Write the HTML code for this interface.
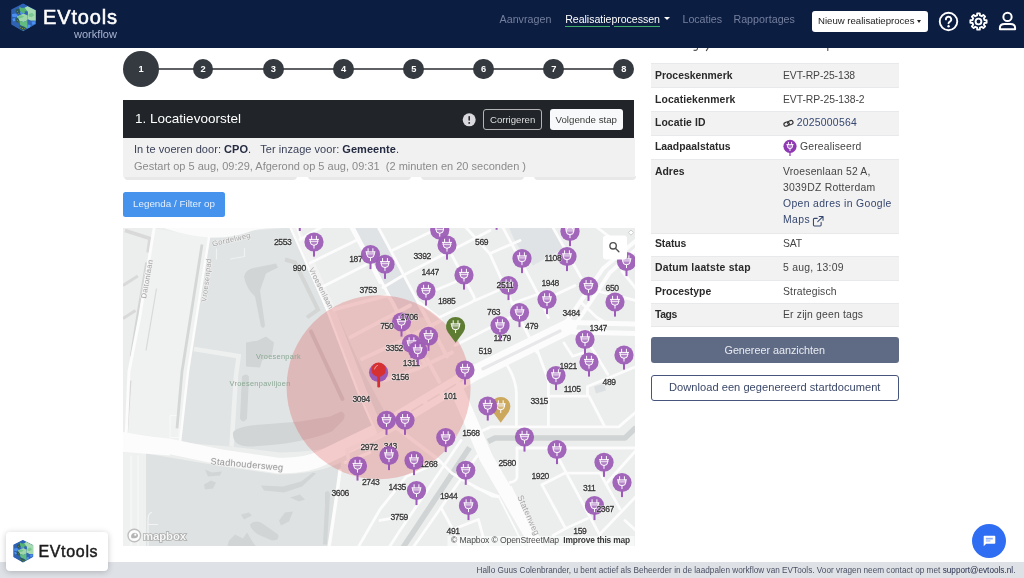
<!DOCTYPE html>
<html lang="nl">
<head>
<meta charset="utf-8">
<title>EVtools workflow</title>
<style>
*{box-sizing:border-box;margin:0;padding:0}
html,body{width:1024px;height:578px;overflow:hidden;background:#fff}
#root{position:absolute;left:0;top:0;width:1024px;height:578px;overflow:hidden;background:#fff;will-change:transform}
body{font-family:"Liberation Sans",sans-serif;color:#333;position:relative}
.abs{position:absolute;white-space:nowrap}
#hdr{left:0;top:0;width:1024px;height:48.200px;background:#0c1d42}
.nav{top:13px;font-size:10.7px;line-height:14px;color:#6d7896}
.step{border-radius:50%;background:#343a40;color:#fff;font-weight:bold;text-align:center}
.s{width:20.600px;height:20.600px;top:58.600px;font-size:9.300px;line-height:20.600px}
#panelh{left:123px;top:100px;width:511px;height:38px;background:#212529}
#panelb{left:123px;top:138px;width:511.800px;height:39.400px;background:#f1f1f2}
.btn{border-radius:3px;text-align:center}
table{border-collapse:collapse}
.row{left:651px;width:247.500px;border-top:1px solid #e8e9eb}
.row.g{background:#f2f2f2}
.k{left:655px;font-weight:bold;font-size:10.4px;color:#2a2a2a}
.v{left:783px;font-size:10.2px;color:#454545}
#map text{font-family:"Liberation Sans",sans-serif}
.num text{font-size:8.6px;text-anchor:middle;letter-spacing:-.4px}
.num .h{fill:#fff;stroke:#fff;stroke-width:1.6px;stroke-opacity:.55;fill-opacity:.55;stroke-linejoin:round}
.num .f{fill:#333;stroke:#333;stroke-width:.28px}
.st{font-size:7.6px;fill:#a4a4a4;text-anchor:middle;stroke:#f2f2f2;stroke-width:1.2px;paint-order:stroke;letter-spacing:.3px}
.pk{font-size:7.4px;fill:#8aa893;text-anchor:middle;letter-spacing:.3px}
</style>
</head>
<body>
<div id="root">

<!-- ================= MAP ================= -->
<svg id="map" class="abs" style="left:123px;top:227.500px" width="511.800" height="318.900" viewBox="123 227.500 511.800 318.900">
<rect x="123" y="227" width="512" height="320" fill="#eceded"/>
<!-- rail strip left -->
<path d="M154 228L209 237L188 371L180 442L126 438L129 371L140 315L149.500 256Z" fill="#f0f1f1"/>
<!-- Vroesenpark -->
<path d="M210 237Q232 238 253 230L290 227L335 309L363 371L392 425Q340 452 280 452L230 446L180 442L188 371Z" fill="#e0e4e5"/>
<!-- south park -->
<path d="M146 453L223 466L278 474Q315 474 341 462L337 500L330 547H146Z" fill="#dfe2e2"/>
<path d="M123 452H146V547H123Z" fill="#eff0f0"/><path d="M131 455V547M138 455V547" stroke="#f6f6f6" stroke-width="1.500" fill="none"/><path d="M148 547V520Q148 512 152 512M148 524H158" stroke="#f4f4f4" stroke-width="1.200" fill="none"/>
<!-- small parks NE -->
<path d="M353.400 227H378.400L417.500 300.500L424 317L401 317L392.500 302Z" fill="#e0e3e5"/>
<path d="M509 227H555L563 248L533 265L516 243Z" fill="#e0e3e5"/>
<path d="M594 386L604 383L606 390L596 393Z" fill="#dde0e3"/>
<!-- big building -->
<path d="M194 348.500L238.700 355.700L236 375L231.500 446" fill="none" stroke="#eef0f0" stroke-width="4.500" stroke-linejoin="miter"/>
<path d="M170 415h9v22h-9z" fill="none" stroke="#f8f8f8" stroke-width="1"/>
<!-- gray blocks top-left -->
<g fill="none" stroke="#d9d9d9" stroke-width="3.500" stroke-linecap="butt">
<path d="M125 230L150 238L148 252"/><path d="M123 285L137.800 275.600" stroke-width="3"/><path d="M123 318L135.500 310" stroke-width="3"/><path d="M130 380L126 440" stroke-width="3"/>
<path d="M146.400 262L138 312L131 356" stroke-width="2.400" stroke="#d4d5d5"/><path d="M156.500 288L146 350" stroke-width="1.200"/>
<path d="M202 244L182 371L177 428" stroke-width="2.800" stroke="#d5d7d7"/>

</g>
<!-- water -->
<g fill="#d2d5d5">
<path d="M244 276Q246 268 256 267L276 263L278 267L266 273L260 290L265 325Q264 329 261 326L255 296Q246 288 244 276Z"/>
<path d="M246 342L258 340L266 336L274 342L272 354L262 360L260 367L246 366Z"/>
<path d="M242 376Q246 372 249 376L247 418Q243 424 240 418Z"/>
<path d="M233 432Q236 426 262 424L300 421L330 416L341 411Q347 413 343 420L332 431Q300 444 250 446Q232 446 233 432Z"/>
<path d="M205 469l7 3 10-1-2 4-12 1zM204 484l7-4 5 2-3 6-8 1zM261 485l22 1 18-5 12-9 3 1-14 13-18 6-20-2zM290 497l10-3 5 5-6 2z"/>
<path d="M241 514l8-2 3 3-8 4zM250 524q6-6 14 0l14 10q2 6-6 6l-14-6q-8-6-8-10zM279 520l6-8 8-1-4 10-8 4zM325 492q4-4 5 2l-3 50h-4l2-40z"/>
<path d="M229 540l6-6 8 4 4-6 6 10 4 5h-30z"/>
</g>
<!-- L-shaped path in park -->
<path d="M285 259L295 262L318 309L307 317" fill="none" stroke="#d4d6d6" stroke-width="4"/>
<path d="M311 331L342.500 398.500" fill="none" stroke="#cdd0d0" stroke-width="4" stroke-linecap="round"/>
<!-- canals -->
<g fill="none" stroke="#d1d4d4" stroke-width="5.500" stroke-linejoin="round">
<path d="M488 441L495 437.500H625L636 427"/>
<path d="M469.500 447L414.400 530L403 547"/>
</g>
<!-- ROADS -->
<g fill="none" stroke="#fcfcfc" stroke-linecap="round" stroke-linejoin="round">
<!-- Gordelweg top -->
<path d="M165 221H300V228Q262 226 250 231Q232 238 210 237Q190 236 165 228Z" fill="#fbfbfb" stroke="none"/>
<path d="M154 228L149.500 256L140 315L129 371L126 438" stroke-width="3"/>
<path d="M209 237L188 371L180 442" stroke-width="2.400"/>
<path d="M216.500 258.500V248.400M230.500 258.500L244.500 256V248" stroke-width="1.200" stroke="#f0f1f1"/>
<!-- Stadhoudersweg -->
<path d="M123 431.400L170 439.500V455L123 451.600Z" fill="#fcfcfc" stroke="none"/>
<path d="M123 441L170 446L223 457L278 465Q305 466 323 457L379 430L475 372.200L569 326" stroke-width="15.500"/>
<path d="M566 322L603 268L636 240" stroke-width="4"/>
<path d="M573 328L610 272L636 249" stroke-width="4"/>
<path d="M570 322L636 323.500" stroke-width="5"/>
<path d="M573 331.500L636 333" stroke-width="5"/>
<!-- Statenweg -->
<path d="M458 392L466 410L486 457L530 533L540 552" stroke-width="13.500"/>
<path d="M511 486L541 548" stroke-width="1.600"/>
<!-- Vroesenlaan -->
<path d="M295 227L330.500 308L362 390L380 432" stroke-width="8.500" stroke="#f2f2f2" stroke-linecap="butt"/>
<path d="M290.400 227L326.500 308L357.500 390L376 432" stroke-width="2.200"/>
<path d="M297 227L301 239" stroke-width="1.600"/>
<path d="M340 470L336 500L329 547" stroke-width="3.400"/>
<path d="M345 462L370 452" stroke-width="3"/>
<g stroke-width="2.800">
<!-- NW grid right of Vroesenlaan -->
<path d="M300 239L320.600 227"/><path d="M310 262.500L356 240"/><path d="M323 286L366.500 264"/><path d="M351 227L380 282"/>
<path d="M353.400 227L392.500 302L424 362"/><path d="M378.400 227L417.500 300.500L447 356"/>
<path d="M392.500 249.700L430 231.700L440 227"/><path d="M383 287L403.400 274.700L490 230"/>
<path d="M334 309L388 295"/><path d="M350.600 336.600L393.700 313.700L410 305"/><path d="M362 358.500L404 339L441 320"/><path d="M427 358.500L439.400 381.400"/>
<path d="M436 289.500L456.500 281"/><path d="M452 255L473.750 295.750Q476 300 471 302L439 317"/>
<path d="M417.500 300.500L439 317"/>
<path d="M466 227L490 253.500L512.500 303.500L537 352"/>
<path d="M503 227L537.500 292.600L548.400 317"/>
<path d="M553 227L581 277"/>
<path d="M556 294L575 285"/>
<path d="M490 253L520 240"/>
<path d="M455 345L512 316"/><path d="M475 300L498 290"/><path d="M512 303L548 290"/>
<path d="M581 302L597 317L607 323"/><path d="M622 270.750L636 288"/><path d="M595 290L636 300"/>
<path d="M597 227L625 248"/>
<!-- south of main road, east -->
<path d="M537.500 350.300L548.400 380V426"/>
<path d="M506 363Q517 380 516.400 395V426"/>
<path d="M564 342.500L572.600 355.800L584 352"/>
<path d="M590.600 345.600L607.800 373.750"/>
<path d="M587.500 395V386L636 366"/>
<path d="M548 395.600H589L604.700 426"/>
<path d="M483 430L490.600 426.400H618.750L636 411.500"/>
<path d="M517 447.500H636"/><path d="M517 447.500V477Q516 481 510 482"/>
<path d="M557 455L565.600 471L600 535"/><path d="M565 472.600H600L620 508.500"/>
<path d="M542 484.300L565 472.600"/><path d="M542 484.300L565.600 528"/>
<path d="M553 535L565.600 528L587.500 518"/>
<path d="M600 533.500L636 496"/><path d="M606 483.500L629.700 457L636 450"/>
<path d="M625 520L636 530"/>
<!-- south-west of Statenweg -->
<path d="M461 440L400 530L389 547"/>
<path d="M477 455.600L425 530L413 547"/>
<path d="M438 458.750L452 472.800L467.500 482L492.500 495.500L498.750 496"/>
<path d="M358 547L380 509L406.500 476L440 461"/>
<path d="M498.750 496L516 530L524 547" stroke-width="1.800"/>
<path d="M441 507L453.400 530L460 547"/><path d="M456.500 527.500L478.400 519L486 547"/>
<path d="M475 486.700L498.400 496"/>
<path d="M380 520L394 517.500"/>
<!-- inside circle blocks -->
<path d="M404 339L418 368"/><path d="M384 380L418 368L452 352"/>
</g>
</g>
<!-- wider streets inside circle -->
<defs><clipPath id="cc"><circle cx="378.600" cy="386.800" r="92"/></clipPath></defs>
<g clip-path="url(#cc)" fill="none" stroke="#f8f8f8" stroke-width="3.800" stroke-linecap="round" stroke-linejoin="round">
<path d="M334 309L388 295"/><path d="M350.600 336.600L393.700 313.700L410 305"/><path d="M362 358.500L404 339L441 320"/>
<path d="M388 295L392.500 302L424 362"/><path d="M413 292L417.500 300.500L447 356"/>
<path d="M404 339L418 368"/><path d="M384 380L418 368L452 352"/><path d="M427 358.500L439.400 381.400"/>
<path d="M396 427L438 458.750"/><path d="M406.500 476L440 461"/>
<path d="M347 450L352 478"/><path d="M347 450L396 427"/>
</g>
<!-- median of main road -->
<path d="M483 368.300L560 330.500" fill="none" stroke="#e8e8ea" stroke-width="3.200" stroke-linecap="round"/>
<path d="M395 420.500L468 376.500" fill="none" stroke="#eceded" stroke-width="1.500" stroke-dasharray="14 5"/>
<!-- pink radius circle -->
<circle cx="378.600" cy="386.800" r="92" fill="#d94848" fill-opacity=".27"/>
<!-- street labels -->
<text class="st" transform="translate(232 241.500) rotate(-13)">Gordelweg</text>
<text class="st" transform="translate(209 280) rotate(-83)">Vroesenpad</text>
<text class="st" transform="translate(149.500 279) rotate(-80)">Daltonlaan</text>
<text class="st" transform="translate(319 289) rotate(63)">Vroesenlaan</text>
<text class="st" transform="translate(246.750 467) rotate(5)" style="font-size:9.200px;fill:#9a9a9a">Stadhoudersweg</text>
<text class="st" transform="translate(526 516) rotate(66)" style="font-size:8.600px">Statenweg</text>
<text class="pk" x="278.500" y="358.800">Vroesenpark</text>
<text class="pk" x="260" y="385.700">Vroesenpaviljoen</text>


<g class="num">
<text class="h" x="355.7" y="261.6">187</text><text class="f" x="355.7" y="261.6">187</text>
<text class="h" x="502.2" y="340.6">1279</text><text class="f" x="502.2" y="340.6">1279</text>
<text class="h" x="411.2" y="365.35">1311</text><text class="f" x="411.2" y="365.35">1311</text>
<text class="h" x="390.2" y="448.6">343</text><text class="f" x="390.2" y="448.6">343</text>
<text class="h" x="428.7" y="466.1">1268</text><text class="f" x="428.7" y="466.1">1268</text>
</g>
<g opacity="1"><path d="M447.87 331.69A9.6 9.6 0 1 1 463.33 331.69L455.6 342.2Z" fill="#5e7d32"/><g stroke="#fff" stroke-width="1" fill="none" stroke-linecap="round"><path d="M453.20000000000005 320.2V323.4M458.0 320.2V323.4M451.0 323.4H460.20000000000005M455.6 329.4V332.2"/><path d="M451.8 323.4V325.5a3.8 3.8 0 0 0 7.6 0V323.4" fill="rgba(255,255,255,0.2)"/><path d="M451.70000000000005 325.4H459.5" stroke-width="0.8"/></g></g><g opacity="0.9"><path d="M493.02 411.69A9.6 9.6 0 1 1 508.48 411.69L500.75 422.2Z" fill="#c9a14e"/><g stroke="#fff" stroke-width="1" fill="none" stroke-linecap="round"><path d="M498.35 400.2V403.4M503.15 400.2V403.4M496.15 403.4H505.35M500.75 409.4V412.2"/><path d="M496.95 403.4V405.5a3.8 3.8 0 0 0 7.6 0V403.4" fill="rgba(255,255,255,0.2)"/><path d="M496.85 405.4H504.65" stroke-width="0.8"/></g></g>
<g opacity=".96">
<rect x="298.800" y="227.500" width="2" height="3" fill="#9a55b8"/><rect x="495.600" y="227.500" width="2" height="1.800" fill="#9a55b8"/>
<g><rect x="438.75" y="237.5" width="2" height="6.6" fill="#9a55b8"/><circle cx="439.75" cy="229.5" r="9.6" fill="#9b59b6" fill-opacity="0.96"/><g stroke="#fff" stroke-width="1" fill="none" stroke-linecap="round"><path d="M437.35 223.7V226.9M442.15 223.7V226.9M435.15 226.9H444.35M439.75 232.9V235.7"/><path d="M435.95 226.9V229.0a3.8 3.8 0 0 0 7.6 0V226.9" fill="rgba(255,255,255,0.2)"/><path d="M435.85 228.9H443.65" stroke-width="0.8"/></g></g>
<g><rect x="569" y="239" width="2" height="6.6" fill="#9a55b8"/><circle cx="570" cy="231" r="9.6" fill="#9b59b6" fill-opacity="0.96"/><g stroke="#fff" stroke-width="1" fill="none" stroke-linecap="round"><path d="M567.6 225.2V228.4M572.4 225.2V228.4M565.4 228.4H574.6M570 234.4V237.2"/><path d="M566.2 228.4V230.5a3.8 3.8 0 0 0 7.6 0V228.4" fill="rgba(255,255,255,0.2)"/><path d="M566.1 230.4H573.9" stroke-width="0.8"/></g></g>
<g><rect x="313" y="249.5" width="2" height="6.6" fill="#9a55b8"/><circle cx="314" cy="241.5" r="9.6" fill="#9b59b6" fill-opacity="0.96"/><g stroke="#fff" stroke-width="1" fill="none" stroke-linecap="round"><path d="M311.6 235.7V238.9M316.4 235.7V238.9M309.4 238.9H318.6M314 244.9V247.7"/><path d="M310.2 238.9V241.0a3.8 3.8 0 0 0 7.6 0V238.9" fill="rgba(255,255,255,0.2)"/><path d="M310.1 240.9H317.9" stroke-width="0.8"/></g></g>
<g><rect x="446" y="252.5" width="2" height="6.6" fill="#9a55b8"/><circle cx="447" cy="244.5" r="9.6" fill="#9b59b6" fill-opacity="0.96"/><g stroke="#fff" stroke-width="1" fill="none" stroke-linecap="round"><path d="M444.6 238.7V241.9M449.4 238.7V241.9M442.4 241.9H451.6M447 247.9V250.7"/><path d="M443.2 241.9V244.0a3.8 3.8 0 0 0 7.6 0V241.9" fill="rgba(255,255,255,0.2)"/><path d="M443.1 243.9H450.9" stroke-width="0.8"/></g></g>
<g><rect x="369.5" y="262" width="2" height="6.6" fill="#9a55b8"/><circle cx="370.5" cy="254" r="9.6" fill="#9b59b6" fill-opacity="0.96"/><g stroke="#fff" stroke-width="1" fill="none" stroke-linecap="round"><path d="M368.1 248.2V251.4M372.9 248.2V251.4M365.9 251.4H375.1M370.5 257.4V260.2"/><path d="M366.7 251.4V253.5a3.8 3.8 0 0 0 7.6 0V251.4" fill="rgba(255,255,255,0.2)"/><path d="M366.6 253.4H374.4" stroke-width="0.8"/></g></g>
<g><rect x="566" y="264" width="2" height="6.6" fill="#9a55b8"/><circle cx="567" cy="256" r="9.6" fill="#9b59b6" fill-opacity="0.96"/><g stroke="#fff" stroke-width="1" fill="none" stroke-linecap="round"><path d="M564.6 250.2V253.4M569.4 250.2V253.4M562.4 253.4H571.6M567 259.4V262.2"/><path d="M563.2 253.4V255.5a3.8 3.8 0 0 0 7.6 0V253.4" fill="rgba(255,255,255,0.2)"/><path d="M563.1 255.4H570.9" stroke-width="0.8"/></g></g>
<g><rect x="521" y="266" width="2" height="6.6" fill="#9a55b8"/><circle cx="522" cy="258" r="9.6" fill="#9b59b6" fill-opacity="0.96"/><g stroke="#fff" stroke-width="1" fill="none" stroke-linecap="round"><path d="M519.6 252.2V255.4M524.4 252.2V255.4M517.4 255.4H526.6M522 261.4V264.2"/><path d="M518.2 255.4V257.5a3.8 3.8 0 0 0 7.6 0V255.4" fill="rgba(255,255,255,0.2)"/><path d="M518.1 257.4H525.9" stroke-width="0.8"/></g></g>
<g><rect x="625.5" y="269" width="2" height="6.6" fill="#9a55b8"/><circle cx="626.5" cy="261" r="9.6" fill="#9b59b6" fill-opacity="0.96"/><g stroke="#fff" stroke-width="1" fill="none" stroke-linecap="round"><path d="M624.1 255.2V258.4M628.9 255.2V258.4M621.9 258.4H631.1M626.5 264.4V267.2"/><path d="M622.7 258.4V260.5a3.8 3.8 0 0 0 7.6 0V258.4" fill="rgba(255,255,255,0.2)"/><path d="M622.6 260.4H630.4" stroke-width="0.8"/></g></g>
<g><rect x="384" y="271.75" width="2" height="6.6" fill="#9a55b8"/><circle cx="385" cy="263.75" r="9.6" fill="#9b59b6" fill-opacity="0.96"/><g stroke="#fff" stroke-width="1" fill="none" stroke-linecap="round"><path d="M382.6 257.95V261.15M387.4 257.95V261.15M380.4 261.15H389.6M385 267.15V269.95"/><path d="M381.2 261.15V263.25a3.8 3.8 0 0 0 7.6 0V261.15" fill="rgba(255,255,255,0.2)"/><path d="M381.1 263.15H388.9" stroke-width="0.8"/></g></g>
<g><rect x="463" y="282.5" width="2" height="6.6" fill="#9a55b8"/><circle cx="464" cy="274.5" r="9.6" fill="#9b59b6" fill-opacity="0.96"/><g stroke="#fff" stroke-width="1" fill="none" stroke-linecap="round"><path d="M461.6 268.7V271.9M466.4 268.7V271.9M459.4 271.9H468.6M464 277.9V280.7"/><path d="M460.2 271.9V274.0a3.8 3.8 0 0 0 7.6 0V271.9" fill="rgba(255,255,255,0.2)"/><path d="M460.1 273.9H467.9" stroke-width="0.8"/></g></g>
<g><rect x="507.5" y="293" width="2" height="6.6" fill="#9a55b8"/><circle cx="508.5" cy="285" r="9.6" fill="#9b59b6" fill-opacity="0.96"/><g stroke="#fff" stroke-width="1" fill="none" stroke-linecap="round"><path d="M506.1 279.2V282.4M510.9 279.2V282.4M503.9 282.4H513.1M508.5 288.4V291.2"/><path d="M504.7 282.4V284.5a3.8 3.8 0 0 0 7.6 0V282.4" fill="rgba(255,255,255,0.2)"/><path d="M504.6 284.4H512.4" stroke-width="0.8"/></g></g>
<g><rect x="587.5" y="293.75" width="2" height="6.6" fill="#9a55b8"/><circle cx="588.5" cy="285.75" r="9.6" fill="#9b59b6" fill-opacity="0.96"/><g stroke="#fff" stroke-width="1" fill="none" stroke-linecap="round"><path d="M586.1 279.95V283.15M590.9 279.95V283.15M583.9 283.15H593.1M588.5 289.15V291.95"/><path d="M584.7 283.15V285.25a3.8 3.8 0 0 0 7.6 0V283.15" fill="rgba(255,255,255,0.2)"/><path d="M584.6 285.15H592.4" stroke-width="0.8"/></g></g>
<g><rect x="425" y="298.5" width="2" height="6.6" fill="#9a55b8"/><circle cx="426" cy="290.5" r="9.6" fill="#9b59b6" fill-opacity="0.96"/><g stroke="#fff" stroke-width="1" fill="none" stroke-linecap="round"><path d="M423.6 284.7V287.9M428.4 284.7V287.9M421.4 287.9H430.6M426 293.9V296.7"/><path d="M422.2 287.9V290.0a3.8 3.8 0 0 0 7.6 0V287.9" fill="rgba(255,255,255,0.2)"/><path d="M422.1 289.9H429.9" stroke-width="0.8"/></g></g>
<g><rect x="546" y="307" width="2" height="6.6" fill="#9a55b8"/><circle cx="547" cy="299" r="9.6" fill="#9b59b6" fill-opacity="0.96"/><g stroke="#fff" stroke-width="1" fill="none" stroke-linecap="round"><path d="M544.6 293.2V296.4M549.4 293.2V296.4M542.4 296.4H551.6M547 302.4V305.2"/><path d="M543.2 296.4V298.5a3.8 3.8 0 0 0 7.6 0V296.4" fill="rgba(255,255,255,0.2)"/><path d="M543.1 298.4H550.9" stroke-width="0.8"/></g></g>
<g><rect x="614" y="309.5" width="2" height="6.6" fill="#9a55b8"/><circle cx="615" cy="301.5" r="9.6" fill="#9b59b6" fill-opacity="0.96"/><g stroke="#fff" stroke-width="1" fill="none" stroke-linecap="round"><path d="M612.6 295.7V298.9M617.4 295.7V298.9M610.4 298.9H619.6M615 304.9V307.7"/><path d="M611.2 298.9V301.0a3.8 3.8 0 0 0 7.6 0V298.9" fill="rgba(255,255,255,0.2)"/><path d="M611.1 300.9H618.9" stroke-width="0.8"/></g></g>
<g><rect x="518.5" y="320" width="2" height="6.6" fill="#9a55b8"/><circle cx="519.5" cy="312" r="9.6" fill="#9b59b6" fill-opacity="0.96"/><g stroke="#fff" stroke-width="1" fill="none" stroke-linecap="round"><path d="M517.1 306.2V309.4M521.9 306.2V309.4M514.9 309.4H524.1M519.5 315.4V318.2"/><path d="M515.7 309.4V311.5a3.8 3.8 0 0 0 7.6 0V309.4" fill="rgba(255,255,255,0.2)"/><path d="M515.6 311.4H523.4" stroke-width="0.8"/></g></g>
<g><rect x="400.5" y="329.5" width="2" height="6.6" fill="#9a55b8"/><circle cx="401.5" cy="321.5" r="9.6" fill="#9b59b6" fill-opacity="0.96"/><g stroke="#fff" stroke-width="1" fill="none" stroke-linecap="round"><path d="M399.1 315.7V318.9M403.9 315.7V318.9M396.9 318.9H406.1M401.5 324.9V327.7"/><path d="M397.7 318.9V321.0a3.8 3.8 0 0 0 7.6 0V318.9" fill="rgba(255,255,255,0.2)"/><path d="M397.6 320.9H405.4" stroke-width="0.8"/></g></g>
<g><rect x="499" y="333" width="2" height="6.6" fill="#9a55b8"/><circle cx="500" cy="325" r="9.6" fill="#9b59b6" fill-opacity="0.96"/><g stroke="#fff" stroke-width="1" fill="none" stroke-linecap="round"><path d="M497.6 319.2V322.4M502.4 319.2V322.4M495.4 322.4H504.6M500 328.4V331.2"/><path d="M496.2 322.4V324.5a3.8 3.8 0 0 0 7.6 0V322.4" fill="rgba(255,255,255,0.2)"/><path d="M496.1 324.4H503.9" stroke-width="0.8"/></g></g>
<g><rect x="427.5" y="343.75" width="2" height="6.6" fill="#9a55b8"/><circle cx="428.5" cy="335.75" r="9.6" fill="#9b59b6" fill-opacity="0.96"/><g stroke="#fff" stroke-width="1" fill="none" stroke-linecap="round"><path d="M426.1 329.95V333.15M430.9 329.95V333.15M423.9 333.15H433.1M428.5 339.15V341.95"/><path d="M424.7 333.15V335.25a3.8 3.8 0 0 0 7.6 0V333.15" fill="rgba(255,255,255,0.2)"/><path d="M424.6 335.15H432.4" stroke-width="0.8"/></g></g>
<g><rect x="584" y="347" width="2" height="6.6" fill="#9a55b8"/><circle cx="585" cy="339" r="9.6" fill="#9b59b6" fill-opacity="0.96"/><g stroke="#fff" stroke-width="1" fill="none" stroke-linecap="round"><path d="M582.6 333.2V336.4M587.4 333.2V336.4M580.4 336.4H589.6M585 342.4V345.2"/><path d="M581.2 336.4V338.5a3.8 3.8 0 0 0 7.6 0V336.4" fill="rgba(255,255,255,0.2)"/><path d="M581.1 338.4H588.9" stroke-width="0.8"/></g></g>
<g><rect x="410.5" y="351" width="2" height="6.6" fill="#9a55b8"/><circle cx="411.5" cy="343" r="9.6" fill="#9b59b6" fill-opacity="0.96"/><g stroke="#fff" stroke-width="1" fill="none" stroke-linecap="round"><path d="M409.1 337.2V340.4M413.9 337.2V340.4M406.9 340.4H416.1M411.5 346.4V349.2"/><path d="M407.7 340.4V342.5a3.8 3.8 0 0 0 7.6 0V340.4" fill="rgba(255,255,255,0.2)"/><path d="M407.6 342.4H415.4" stroke-width="0.8"/></g></g>
<g><rect x="416.75" y="358" width="2" height="6.6" fill="#9a55b8"/><circle cx="417.75" cy="350" r="9.6" fill="#9b59b6" fill-opacity="0.96"/><g stroke="#fff" stroke-width="1" fill="none" stroke-linecap="round"><path d="M415.35 344.2V347.4M420.15 344.2V347.4M413.15 347.4H422.35M417.75 353.4V356.2"/><path d="M413.95 347.4V349.5a3.8 3.8 0 0 0 7.6 0V347.4" fill="rgba(255,255,255,0.2)"/><path d="M413.85 349.4H421.65" stroke-width="0.8"/></g></g>
<g><rect x="623" y="362.5" width="2" height="6.6" fill="#9a55b8"/><circle cx="624" cy="354.5" r="9.6" fill="#9b59b6" fill-opacity="0.96"/><g stroke="#fff" stroke-width="1" fill="none" stroke-linecap="round"><path d="M621.6 348.7V351.9M626.4 348.7V351.9M619.4 351.9H628.6M624 357.9V360.7"/><path d="M620.2 351.9V354.0a3.8 3.8 0 0 0 7.6 0V351.9" fill="rgba(255,255,255,0.2)"/><path d="M620.1 353.9H627.9" stroke-width="0.8"/></g></g>
<g><rect x="588" y="369.5" width="2" height="6.6" fill="#9a55b8"/><circle cx="589" cy="361.5" r="9.6" fill="#9b59b6" fill-opacity="0.96"/><g stroke="#fff" stroke-width="1" fill="none" stroke-linecap="round"><path d="M586.6 355.7V358.9M591.4 355.7V358.9M584.4 358.9H593.6M589 364.9V367.7"/><path d="M585.2 358.9V361.0a3.8 3.8 0 0 0 7.6 0V358.9" fill="rgba(255,255,255,0.2)"/><path d="M585.1 360.9H592.9" stroke-width="0.8"/></g></g>
<g><rect x="464" y="377.5" width="2" height="6.6" fill="#9a55b8"/><circle cx="465" cy="369.5" r="9.6" fill="#9b59b6" fill-opacity="0.96"/><g stroke="#fff" stroke-width="1" fill="none" stroke-linecap="round"><path d="M462.6 363.7V366.9M467.4 363.7V366.9M460.4 366.9H469.6M465 372.9V375.7"/><path d="M461.2 366.9V369.0a3.8 3.8 0 0 0 7.6 0V366.9" fill="rgba(255,255,255,0.2)"/><path d="M461.1 368.9H468.9" stroke-width="0.8"/></g></g>
<g><rect x="555" y="383" width="2" height="6.6" fill="#9a55b8"/><circle cx="556" cy="375" r="9.6" fill="#9b59b6" fill-opacity="0.96"/><g stroke="#fff" stroke-width="1" fill="none" stroke-linecap="round"><path d="M553.6 369.2V372.4M558.4 369.2V372.4M551.4 372.4H560.6M556 378.4V381.2"/><path d="M552.2 372.4V374.5a3.8 3.8 0 0 0 7.6 0V372.4" fill="rgba(255,255,255,0.2)"/><path d="M552.1 374.4H559.9" stroke-width="0.8"/></g></g>
<g><rect x="486.75" y="413.5" width="2" height="6.6" fill="#9a55b8"/><circle cx="487.75" cy="405.5" r="9.6" fill="#9b59b6" fill-opacity="0.96"/><g stroke="#fff" stroke-width="1" fill="none" stroke-linecap="round"><path d="M485.35 399.7V402.9M490.15 399.7V402.9M483.15 402.9H492.35M487.75 408.9V411.7"/><path d="M483.95 402.9V405.0a3.8 3.8 0 0 0 7.6 0V402.9" fill="rgba(255,255,255,0.2)"/><path d="M483.85 404.9H491.65" stroke-width="0.8"/></g></g>
<g><rect x="385.5" y="427.75" width="2" height="6.6" fill="#9a55b8"/><circle cx="386.5" cy="419.75" r="9.6" fill="#9b59b6" fill-opacity="0.96"/><g stroke="#fff" stroke-width="1" fill="none" stroke-linecap="round"><path d="M384.1 413.95V417.15M388.9 413.95V417.15M381.9 417.15H391.1M386.5 423.15V425.95"/><path d="M382.7 417.15V419.25a3.8 3.8 0 0 0 7.6 0V417.15" fill="rgba(255,255,255,0.2)"/><path d="M382.6 419.15H390.4" stroke-width="0.8"/></g></g>
<g><rect x="404" y="427.75" width="2" height="6.6" fill="#9a55b8"/><circle cx="405" cy="419.75" r="9.6" fill="#9b59b6" fill-opacity="0.96"/><g stroke="#fff" stroke-width="1" fill="none" stroke-linecap="round"><path d="M402.6 413.95V417.15M407.4 413.95V417.15M400.4 417.15H409.6M405 423.15V425.95"/><path d="M401.2 417.15V419.25a3.8 3.8 0 0 0 7.6 0V417.15" fill="rgba(255,255,255,0.2)"/><path d="M401.1 419.15H408.9" stroke-width="0.8"/></g></g>
<g><rect x="523.5" y="444.5" width="2" height="6.6" fill="#9a55b8"/><circle cx="524.5" cy="436.5" r="9.6" fill="#9b59b6" fill-opacity="0.96"/><g stroke="#fff" stroke-width="1" fill="none" stroke-linecap="round"><path d="M522.1 430.7V433.9M526.9 430.7V433.9M519.9 433.9H529.1M524.5 439.9V442.7"/><path d="M520.7 433.9V436.0a3.8 3.8 0 0 0 7.6 0V433.9" fill="rgba(255,255,255,0.2)"/><path d="M520.6 435.9H528.4" stroke-width="0.8"/></g></g>
<g><rect x="444.75" y="445" width="2" height="6.6" fill="#9a55b8"/><circle cx="445.75" cy="437" r="9.6" fill="#9b59b6" fill-opacity="0.96"/><g stroke="#fff" stroke-width="1" fill="none" stroke-linecap="round"><path d="M443.35 431.2V434.4M448.15 431.2V434.4M441.15 434.4H450.35M445.75 440.4V443.2"/><path d="M441.95 434.4V436.5a3.8 3.8 0 0 0 7.6 0V434.4" fill="rgba(255,255,255,0.2)"/><path d="M441.85 436.4H449.65" stroke-width="0.8"/></g></g>
<g><rect x="556" y="457" width="2" height="6.6" fill="#9a55b8"/><circle cx="557" cy="449" r="9.6" fill="#9b59b6" fill-opacity="0.96"/><g stroke="#fff" stroke-width="1" fill="none" stroke-linecap="round"><path d="M554.6 443.2V446.4M559.4 443.2V446.4M552.4 446.4H561.6M557 452.4V455.2"/><path d="M553.2 446.4V448.5a3.8 3.8 0 0 0 7.6 0V446.4" fill="rgba(255,255,255,0.2)"/><path d="M553.1 448.4H560.9" stroke-width="0.8"/></g></g>
<g><rect x="388" y="463" width="2" height="6.6" fill="#9a55b8"/><circle cx="389" cy="455" r="9.6" fill="#9b59b6" fill-opacity="0.96"/><g stroke="#fff" stroke-width="1" fill="none" stroke-linecap="round"><path d="M386.6 449.2V452.4M391.4 449.2V452.4M384.4 452.4H393.6M389 458.4V461.2"/><path d="M385.2 452.4V454.5a3.8 3.8 0 0 0 7.6 0V452.4" fill="rgba(255,255,255,0.2)"/><path d="M385.1 454.4H392.9" stroke-width="0.8"/></g></g>
<g><rect x="413" y="468" width="2" height="6.6" fill="#9a55b8"/><circle cx="414" cy="460" r="9.6" fill="#9b59b6" fill-opacity="0.96"/><g stroke="#fff" stroke-width="1" fill="none" stroke-linecap="round"><path d="M411.6 454.2V457.4M416.4 454.2V457.4M409.4 457.4H418.6M414 463.4V466.2"/><path d="M410.2 457.4V459.5a3.8 3.8 0 0 0 7.6 0V457.4" fill="rgba(255,255,255,0.2)"/><path d="M410.1 459.4H417.9" stroke-width="0.8"/></g></g>
<g><rect x="603" y="469.75" width="2" height="6.6" fill="#9a55b8"/><circle cx="604" cy="461.75" r="9.6" fill="#9b59b6" fill-opacity="0.96"/><g stroke="#fff" stroke-width="1" fill="none" stroke-linecap="round"><path d="M601.6 455.95V459.15M606.4 455.95V459.15M599.4 459.15H608.6M604 465.15V467.95"/><path d="M600.2 459.15V461.25a3.8 3.8 0 0 0 7.6 0V459.15" fill="rgba(255,255,255,0.2)"/><path d="M600.1 461.15H607.9" stroke-width="0.8"/></g></g>
<g><rect x="356.5" y="473.5" width="2" height="6.6" fill="#9a55b8"/><circle cx="357.5" cy="465.5" r="9.6" fill="#9b59b6" fill-opacity="0.96"/><g stroke="#fff" stroke-width="1" fill="none" stroke-linecap="round"><path d="M355.1 459.7V462.9M359.9 459.7V462.9M352.9 462.9H362.1M357.5 468.9V471.7"/><path d="M353.7 462.9V465.0a3.8 3.8 0 0 0 7.6 0V462.9" fill="rgba(255,255,255,0.2)"/><path d="M353.6 464.9H361.4" stroke-width="0.8"/></g></g>
<g><rect x="464.75" y="477.75" width="2" height="6.6" fill="#9a55b8"/><circle cx="465.75" cy="469.75" r="9.6" fill="#9b59b6" fill-opacity="0.96"/><g stroke="#fff" stroke-width="1" fill="none" stroke-linecap="round"><path d="M463.35 463.95V467.15M468.15 463.95V467.15M461.15 467.15H470.35M465.75 473.15V475.95"/><path d="M461.95 467.15V469.25a3.8 3.8 0 0 0 7.6 0V467.15" fill="rgba(255,255,255,0.2)"/><path d="M461.85 469.15H469.65" stroke-width="0.8"/></g></g>
<g><rect x="621" y="490" width="2" height="6.6" fill="#9a55b8"/><circle cx="622" cy="482" r="9.6" fill="#9b59b6" fill-opacity="0.96"/><g stroke="#fff" stroke-width="1" fill="none" stroke-linecap="round"><path d="M619.6 476.2V479.4M624.4 476.2V479.4M617.4 479.4H626.6M622 485.4V488.2"/><path d="M618.2 479.4V481.5a3.8 3.8 0 0 0 7.6 0V479.4" fill="rgba(255,255,255,0.2)"/><path d="M618.1 481.4H625.9" stroke-width="0.8"/></g></g>
<g><rect x="415.5" y="498" width="2" height="6.6" fill="#9a55b8"/><circle cx="416.5" cy="490" r="9.6" fill="#9b59b6" fill-opacity="0.96"/><g stroke="#fff" stroke-width="1" fill="none" stroke-linecap="round"><path d="M414.1 484.2V487.4M418.9 484.2V487.4M411.9 487.4H421.1M416.5 493.4V496.2"/><path d="M412.7 487.4V489.5a3.8 3.8 0 0 0 7.6 0V487.4" fill="rgba(255,255,255,0.2)"/><path d="M412.6 489.4H420.4" stroke-width="0.8"/></g></g>
<g><rect x="467.5" y="513" width="2" height="6.6" fill="#9a55b8"/><circle cx="468.5" cy="505" r="9.6" fill="#9b59b6" fill-opacity="0.96"/><g stroke="#fff" stroke-width="1" fill="none" stroke-linecap="round"><path d="M466.1 499.2V502.4M470.9 499.2V502.4M463.9 502.4H473.1M468.5 508.4V511.2"/><path d="M464.7 502.4V504.5a3.8 3.8 0 0 0 7.6 0V502.4" fill="rgba(255,255,255,0.2)"/><path d="M464.6 504.4H472.4" stroke-width="0.8"/></g></g>
<g><rect x="593.5" y="513" width="2" height="6.6" fill="#9a55b8"/><circle cx="594.5" cy="505" r="9.6" fill="#9b59b6" fill-opacity="0.96"/><g stroke="#fff" stroke-width="1" fill="none" stroke-linecap="round"><path d="M592.1 499.2V502.4M596.9 499.2V502.4M589.9 502.4H599.1M594.5 508.4V511.2"/><path d="M590.7 502.4V504.5a3.8 3.8 0 0 0 7.6 0V502.4" fill="rgba(255,255,255,0.2)"/><path d="M590.6 504.4H598.4" stroke-width="0.8"/></g></g>
</g>
<!-- red pin -->
<g>
<circle cx="378.6" cy="372" r="9.6" fill="#9b59b6"/>
<rect x="377.3" y="375" width="2.8" height="12" rx="1.2" fill="#d32f2f"/>
<circle cx="378.6" cy="369.2" r="7.2" fill="#d63030"/>
<path d="M374.5 368.5a4.5 4.5 0 0 1 3-3.6" stroke="#f3b0b0" stroke-width="0.9" fill="none" stroke-linecap="round"/>
</g>

<g class="num">
<text class="h" x="282.7" y="244.6">2553</text><text class="f" x="282.7" y="244.6">2553</text>
<text class="h" x="299.2" y="270.6">990</text><text class="f" x="299.2" y="270.6">990</text>
<text class="h" x="368.2" y="292.6">3753</text><text class="f" x="368.2" y="292.6">3753</text>
<text class="h" x="481.7" y="244.1">569</text><text class="f" x="481.7" y="244.1">569</text>
<text class="h" x="422.2" y="258.6">3392</text><text class="f" x="422.2" y="258.6">3392</text>
<text class="h" x="430.2" y="274.1">1447</text><text class="f" x="430.2" y="274.1">1447</text>
<text class="h" x="446.7" y="303.6">1885</text><text class="f" x="446.7" y="303.6">1885</text>
<text class="h" x="552.95" y="260.6">1108</text><text class="f" x="552.95" y="260.6">1108</text>
<text class="h" x="504.95" y="287.6">2511</text><text class="f" x="504.95" y="287.6">2511</text>
<text class="h" x="550.2" y="285.1">1948</text><text class="f" x="550.2" y="285.1">1948</text>
<text class="h" x="612.2" y="290.1">650</text><text class="f" x="612.2" y="290.1">650</text>
<text class="h" x="571.2" y="315.35">3484</text><text class="f" x="571.2" y="315.35">3484</text>
<text class="h" x="493.7" y="314.6">763</text><text class="f" x="493.7" y="314.6">763</text>
<text class="h" x="531.7" y="328.1">479</text><text class="f" x="531.7" y="328.1">479</text>
<text class="h" x="598.2" y="330.6">1347</text><text class="f" x="598.2" y="330.6">1347</text>
<text class="h" x="409.2" y="319.6">1706</text><text class="f" x="409.2" y="319.6">1706</text>
<text class="h" x="386.7" y="328.6">750</text><text class="f" x="386.7" y="328.6">750</text>
<text class="h" x="394.2" y="350.35">3352</text><text class="f" x="394.2" y="350.35">3352</text>
<text class="h" x="485.2" y="353.6">519</text><text class="f" x="485.2" y="353.6">519</text>
<text class="h" x="568.2" y="368.35">1921</text><text class="f" x="568.2" y="368.35">1921</text>
<text class="h" x="400.2" y="379.6">3156</text><text class="f" x="400.2" y="379.6">3156</text>
<text class="h" x="450.2" y="398.6">101</text><text class="f" x="450.2" y="398.6">101</text>
<text class="h" x="572.2" y="391.1">1105</text><text class="f" x="572.2" y="391.1">1105</text>
<text class="h" x="609.2" y="384.1">489</text><text class="f" x="609.2" y="384.1">489</text>
<text class="h" x="539.2" y="403.6">3315</text><text class="f" x="539.2" y="403.6">3315</text>
<text class="h" x="470.95" y="435.1">1568</text><text class="f" x="470.95" y="435.1">1568</text>
<text class="h" x="507.2" y="465.6">2580</text><text class="f" x="507.2" y="465.6">2580</text>
<text class="h" x="540.2" y="478.6">1920</text><text class="f" x="540.2" y="478.6">1920</text>
<text class="h" x="397.2" y="489.6">1435</text><text class="f" x="397.2" y="489.6">1435</text>
<text class="h" x="448.7" y="498.6">1944</text><text class="f" x="448.7" y="498.6">1944</text>
<text class="h" x="589.2" y="490.6">311</text><text class="f" x="589.2" y="490.6">311</text>
<text class="h" x="605.2" y="511.6">2367</text><text class="f" x="605.2" y="511.6">2367</text>
<text class="h" x="361.2" y="401.1">3094</text><text class="f" x="361.2" y="401.1">3094</text>
<text class="h" x="369.2" y="449.1">2972</text><text class="f" x="369.2" y="449.1">2972</text>
<text class="h" x="370.7" y="484.35">2743</text><text class="f" x="370.7" y="484.35">2743</text>
<text class="h" x="340.2" y="495.1">3606</text><text class="f" x="340.2" y="495.1">3606</text>
<text class="h" x="399.2" y="519.35">3759</text><text class="f" x="399.2" y="519.35">3759</text>
<text class="h" x="453.2" y="533.6">491</text><text class="f" x="453.2" y="533.6">491</text>
<text class="h" x="579.95" y="533.6">159</text><text class="f" x="579.95" y="533.6">159</text>
</g>
<!-- search control -->
<rect x="603" y="235" width="24" height="24" rx="3" fill="#fff"/>
<g stroke="#505050" stroke-width="1.350" fill="none" stroke-linecap="round"><circle cx="613.100" cy="245.300" r="3.200"/><path d="M615.600 247.900l3.300 3.300"/></g>
<path d="M631 229.500l2.600 2.600-2.600 2.600-2.600-2.600z" fill="#fff" stroke="#c4c4c4" stroke-width=".8"/>
<!-- attribution -->
<rect x="447.5" y="535.5" width="187" height="11" fill="#fff" fill-opacity=".55"/>

<!-- mapbox logo -->
<g>
<circle cx="134.3" cy="535" r="6.3" fill="#fff" fill-opacity=".85" stroke="#9a9a9a" stroke-opacity=".6" stroke-width="1.4"/>
<path d="M131.6 537.8c-2-3.6 2.4-7.4 5.6-4.6c2 1.9 .6 5.2-5.6 4.600z" fill="#b5b5b5"/>
<circle cx="135.3" cy="534.2" r="1.1" fill="#fff"/>
<text x="143" y="539.2" font-size="11.4" font-weight="bold" fill="#fff" fill-opacity=".9" stroke="#8f8f8f" stroke-opacity=".65" stroke-width="1.7" paint-order="stroke" letter-spacing="-.1">mapbox</text>
</g>
</svg>

<div class="abs" style="left:451px;top:534.80px;font-size:8.6px;line-height:11.0px;letter-spacing:-0.128px;color:#4c4c4c;">© Mapbox © OpenStreetMap</div>
<div class="abs" style="left:563.3px;top:534.80px;font-size:8.4px;line-height:11.0px;letter-spacing:-0.165px;font-weight:bold;color:#3a3a3a;">Improve this map</div>

<!-- ================= HEADER ================= -->
<div id="hdr" class="abs"></div>
<svg class="abs" style="left:6px;top:0" width="40" height="36" viewBox="0 0 40 36">
<defs><clipPath id="hx"><polygon points="17.13,3.61 29.91,10.16 29.91,24.11 17.13,31.15 5.36,24.42 5.36,9.53"/></clipPath></defs>
<g clip-path="url(#hx)">
<rect width="40" height="36" fill="#3367b6"/>
<polygon points="5.48,9.66 17.13,3.74 17.13,15.58 12.46,20.56 14.33,24.92 17.13,31.03 5.48,24.30" fill="#2f62b0"/>
<polygon points="5.92,14.33 9.35,13.40 12.15,14.95 9.97,17.13 6.23,16.82" fill="#4a8ff0"/>
<polygon points="6.23,18.69 9.35,18.07 9.97,20.56 7.48,21.50" fill="#4d94f2"/>
<polygon points="13.40,12.15 16.51,11.21 17.45,13.40 14.95,14.33" fill="#4a8ff0"/>
<polygon points="14.64,4.67 18.69,4.36 20.56,6.23 18.07,8.10 14.95,7.17" fill="#2c63b8"/>
<polygon points="13.40,6.85 15.89,8.10 18.69,7.79 21.50,6.54 25.23,8.72 22.12,11.53 19.94,11.21 18.07,13.40 14.95,12.15 13.40,9.97" fill="#55b374"/>
<polygon points="18.69,7.79 21.50,6.23 29.78,10.28 29.78,20.87 24.92,20.87 21.50,19.00 21.81,11.53" fill="#a6dbb2"/>
<polygon points="22.43,14.02 26.17,12.77 28.35,15.26 25.55,17.13 22.74,16.51" fill="#7cc892"/>
<polygon points="18.69,11.21 21.50,11.84 21.81,14.64 19.63,14.33" fill="#2f66b4"/>
<polygon points="10.90,16.51 17.45,13.40 21.50,15.58 21.50,20.25 17.45,22.12 13.40,20.87" fill="#9ed7aa"/>
<polygon points="11.21,16.82 14.95,15.26 18.07,16.32 15.58,18.07 12.46,18.38" fill="#74c48b"/>
<polygon points="13.40,20.87 17.45,22.12 21.50,20.25 21.93,28.79 18.69,27.10 14.21,24.92" fill="#62bc80"/>
<polygon points="21.50,20.25 24.92,20.87 29.78,20.87 29.78,23.99 21.93,28.54" fill="#3467b8"/>
<polygon points="25.55,21.81 28.97,21.18 29.28,23.68 26.48,24.92" fill="#4a90f2"/>
<polygon points="21.81,24.61 24.61,24.92 23.99,27.41 21.93,28.35" fill="#4c93f4"/>
<polygon points="9.97,9.35 13.40,8.72 14.02,13.08 11.84,14.33 9.66,11.84" fill="#2b5a58"/>
<polygon points="9.03,18.38 12.15,18.07 13.40,21.18 12.77,23.36 9.97,21.81" fill="#2b5a58"/>
<polygon points="13.40,25.23 18.69,27.10 20.25,29.28 17.13,31.03 14.02,28.66" fill="#2b5a58"/>
<g fill="#d9c21f"><circle cx="11.53" cy="11.53" r=".42"/><circle cx="12.46" cy="13.27" r=".36"/><circle cx="11.40" cy="20.25" r=".42"/><circle cx="12.34" cy="21.93" r=".36"/><circle cx="14.64" cy="27.41" r=".4"/><circle cx="16.51" cy="28.54" r=".42"/><circle cx="18.38" cy="28.54" r=".4"/><circle cx="17.45" cy="30.22" r=".4"/></g>
</g>
</svg>
<div class="abs" style="left:43px;top:5.00px;font-size:20px;line-height:24.0px;letter-spacing:0.866px;color:#fff;-webkit-text-stroke:.55px #fff;">EVtools</div>
<div class="abs" style="left:74px;top:26.50px;font-size:11px;line-height:14.0px;letter-spacing:0.025px;color:#a9b4cf;">workflow</div>

<div class="abs" style="left:499.5px;top:12.00px;font-size:10.7px;line-height:14.0px;letter-spacing:0.033px;color:#747f9d;">Aanvragen</div>
<div class="abs" style="left:565.2px;top:12.00px;font-size:10.6px;line-height:14.0px;letter-spacing:-0.032px;color:#fff;">Realisatieprocessen</div>
<div class="abs" style="left:565.2px;top:25.500px;width:44.600px;height:1.2px;background:#3fae6a"></div>
<div class="abs" style="left:614.300px;top:25.500px;width:45.700px;height:1.2px;background:#3fae6a"></div>
<div class="abs" style="left:663.5px;top:17px;border-left:3px solid transparent;border-right:3px solid transparent;border-top:3.4px solid #fff"></div>
<div class="abs" style="left:682.5px;top:12.00px;font-size:10.7px;line-height:14.0px;letter-spacing:-0.039px;color:#747f9d;">Locaties</div>
<div class="abs" style="left:733.4px;top:12.00px;font-size:10.7px;line-height:14.0px;letter-spacing:0.036px;color:#747f9d;">Rapportages</div>
<div class="abs btn" style="left:811.5px;top:10.500px;width:116.500px;height:21px;background:#fff;"></div>
<div class="abs" style="left:818px;top:13.80px;font-size:9.6px;line-height:14.0px;letter-spacing:-0.001px;color:#222;">Nieuw realisatieproces</div>
<div class="abs" style="left:916.5px;top:19.500px;border-left:2.800px solid transparent;border-right:2.800px solid transparent;border-top:3.200px solid #222"></div>
<!-- help -->
<svg class="abs" style="left:937.1px;top:9.7px" width="23" height="23" viewBox="0 0 23 23"><circle cx="11.5" cy="11.5" r="8.75" fill="none" stroke="#fff" stroke-width="1.9"/><path d="M8.900 9.400a2.650 2.650 0 1 1 4 2.250c-.9.550-1.350 .95-1.350 1.600" fill="none" stroke="#fff" stroke-width="1.900" stroke-linecap="round"/><circle cx="11.550" cy="16.300" r="1.200" fill="#fff"/></svg>
<!-- gear -->
<svg class="abs" style="left:967px;top:9.700px" width="23" height="23" viewBox="0 0 23 23"><path fill="none" stroke="#fff" stroke-width="1.900" stroke-linejoin="round" d="M10.05 5.47L10.22 3.40L12.78 3.40L12.95 5.47L14.74 6.21L16.32 4.87L18.13 6.68L16.79 8.26L17.53 10.05L19.60 10.22L19.60 12.78L17.53 12.95L16.79 14.74L18.13 16.32L16.32 18.13L14.74 16.79L12.95 17.53L12.78 19.60L10.22 19.60L10.05 17.53L8.26 16.79L6.68 18.13L4.87 16.32L6.21 14.74L5.47 12.95L3.40 12.78L3.40 10.22L5.47 10.05L6.21 8.26L4.87 6.68L6.68 4.87L8.26 6.21Z"/><circle cx="11.500" cy="11.500" r="2.900" fill="none" stroke="#fff" stroke-width="1.900"/></svg>
<!-- user -->
<svg class="abs" style="left:996.100px;top:9.400px" width="23" height="23" viewBox="0 0 23 23"><circle cx="11.500" cy="7.900" r="4.150" fill="none" stroke="#fff" stroke-width="2"/><path d="M3.900 20.200v-1.400c0-2.600 2.100-3.800 4.700-3.800h5.800c2.600 0 4.700 1.200 4.700 3.800v1.400z" fill="none" stroke="#fff" stroke-width="2" stroke-linejoin="round"/></svg>

<!-- ================= STEPPER ================= -->
<div class="abs" style="left:141px;top:68.150px;width:483px;height:1.500px;background:#5e6064"></div>
<div class="abs step" style="left:123px;top:51px;width:36px;height:36px;font-size:9.300px;line-height:36px">1</div>
<div class="abs step s" style="left:192.75px">2</div>
<div class="abs step s" style="left:263.05px">3</div>
<div class="abs step s" style="left:333.20px">4</div>
<div class="abs step s" style="left:403.45px">5</div>
<div class="abs step s" style="left:473.20px">6</div>
<div class="abs step s" style="left:543.45px">7</div>
<div class="abs step s" style="left:613.45px">8</div>

<!-- ================= PANEL ================= -->
<div id="panelh" class="abs"></div>
<div class="abs" style="left:135px;top:110.00px;font-size:13.5px;line-height:18.0px;letter-spacing:0.010px;color:#fff;">1. Locatievoorstel</div>
<svg class="abs" style="left:462px;top:113px" width="14" height="14" viewBox="0 0 14 14"><circle cx="7.200" cy="6.800" r="6.500" fill="#d9d9de"/><rect x="6.450" y="3" width="1.500" height="4.800" rx=".7" fill="#212529"/><circle cx="7.200" cy="9.900" r=".95" fill="#212529"/></svg>
<div class="abs btn" style="left:483px;top:109px;width:59px;height:21px;border:1px solid #b4b4b4;"></div><div class="abs" style="left:490px;top:112.70px;font-size:9.6px;line-height:14.0px;letter-spacing:-0.008px;color:#dedede;">Corrigeren</div>
<div class="abs btn" style="left:549.500px;top:109px;width:73.500px;height:21px;background:#f8f9fa;"></div><div class="abs" style="left:555.5px;top:112.70px;font-size:9.7px;line-height:14.0px;letter-spacing:0.006px;color:#3a3a3a;">Volgende stap</div>
<div class="abs" style="left:124px;top:176px;width:173px;height:4.200px;background:#e8e8e9;border-radius:0 0 4px 4px"></div>
<div class="abs" style="left:308px;top:176px;width:102.500px;height:4.200px;background:#e8e8e9;border-radius:0 0 4px 4px"></div>
<div class="abs" style="left:420.600px;top:176px;width:103px;height:4.200px;background:#e8e8e9;border-radius:0 0 4px 4px"></div>
<div class="abs" style="left:534px;top:176px;width:101.500px;height:4.200px;background:#e8e8e9;border-radius:0 0 4px 4px"></div>
<div id="panelb" class="abs"></div>
<div class="abs" style="left:134px;top:142.00px;font-size:11px;line-height:14.0px;letter-spacing:0.043px;color:#3b4258;white-space:pre;">In te voeren door: <b style="color:#252b40">CPO</b>.   Ter inzage voor: <b style="color:#252b40">Gemeente</b>.</div>
<div class="abs" style="left:134px;top:158.50px;font-size:11px;line-height:14.0px;letter-spacing:0.008px;color:#8b8b8b;white-space:pre;">Gestart op 5 aug, 09:29, Afgerond op 5 aug, 09:31  (2 minuten en 20 seconden )</div>

<div class="abs btn" style="left:123px;top:191.500px;width:102px;height:25px;background:#4693ee;border-radius:2.500px"></div><div class="abs" style="left:133px;top:197.00px;font-size:9.8px;line-height:14.0px;letter-spacing:0.016px;color:#e6effc;">Legenda / Filter op</div>

<!-- ================= DETAILS ================= -->
<svg class="abs" style="left:690px;top:48px" width="150" height="4" viewBox="0 0 150 4"><g fill="none" stroke="#4a4a4a" stroke-width="1.100" stroke-linecap="round"><path d="M7.500 0c0 2.200-1 2.600-3.600 2.200"/><path d="M18 0l-1.600 2.600"/><path d="M137.800 0v2.400"/></g></svg>

<div class="abs row g" style="top:63px;height:24px"></div>
<div class="abs row" style="top:87px;height:23.500px"></div>
<div class="abs row g" style="top:110.500px;height:24px"></div>
<div class="abs row" style="top:134.500px;height:24.500px"></div>
<div class="abs row g" style="top:159px;height:73.500px"></div>
<div class="abs row" style="top:232.500px;height:23.500px"></div>
<div class="abs row g" style="top:256px;height:23.500px"></div>
<div class="abs row" style="top:279.500px;height:23.500px"></div>
<div class="abs row g" style="top:303px;height:23.500px;border-bottom:1px solid #e6e8ea"></div>

<div class="abs" style="left:655px;top:68.70px;font-size:10.4px;line-height:14.0px;letter-spacing:0.007px;font-weight:bold;color:#2a2a2a;">Proceskenmerk</div><div class="abs" style="left:783px;top:68.70px;font-size:10.4px;line-height:14.0px;letter-spacing:-0.103px;color:#454545;">EVT-RP-25-138</div>
<div class="abs" style="left:655px;top:92.50px;font-size:10.4px;line-height:14.0px;letter-spacing:0.098px;font-weight:bold;color:#2a2a2a;">Locatiekenmerk</div><div class="abs" style="left:783px;top:92.50px;font-size:10.4px;line-height:14.0px;letter-spacing:-0.073px;color:#454545;">EVT-RP-25-138-2</div>
<div class="abs" style="left:655px;top:115.80px;font-size:10.4px;line-height:14.0px;letter-spacing:0.084px;font-weight:bold;color:#2a2a2a;">Locatie ID</div>
<svg class="abs" style="left:783px;top:119px" width="11" height="9" viewBox="0 0 11 9"><g fill="none" stroke="#333" stroke-width="1.2" transform="rotate(-20 5.5 4.5)"><rect x=".8" y="2.5" width="5.4" height="3.800" rx="1.900"/><rect x="4.800" y="2.500" width="5.400" height="3.800" rx="1.900"/></g></svg>
<div class="abs" style="left:796.7px;top:115.80px;font-size:10.4px;line-height:14.0px;letter-spacing:0.250px;color:#35466f;">2025000564</div>
<div class="abs" style="left:655px;top:139.50px;font-size:10.4px;line-height:14.0px;letter-spacing:-0.011px;font-weight:bold;color:#2a2a2a;">Laadpaalstatus</div>
<svg class="abs" style="left:782px;top:139px" width="16" height="18" viewBox="0 0 16 18"><rect x="7.400" y="12" width="1.200" height="5" fill="#8f38b3"/><circle cx="8" cy="7.300" r="6.600" fill="#8f38b3"/><g stroke="#fff" stroke-width=".9" fill="none" stroke-linecap="round"><path d="M6.400 3.300v2.300M9.600 3.300v2.300M4.800 5.600h6.400M8 9.800v1.800"/><path d="M5.400 5.600v1.400a2.600 2.600 0 0 0 5.200 0v-1.400" fill="rgba(255,255,255,.3)"/></g></svg>
<div class="abs" style="left:800px;top:139.50px;font-size:10.4px;line-height:14.0px;letter-spacing:0.167px;color:#454545;">Gerealiseerd</div>
<div class="abs" style="left:655px;top:164.50px;font-size:10.4px;line-height:14.0px;letter-spacing:0.009px;font-weight:bold;color:#2a2a2a;">Adres</div>
<div class="abs" style="left:783px;top:164.50px;font-size:10.4px;line-height:14.0px;letter-spacing:0.174px;color:#454545;">Vroesenlaan 52 A,</div>
<div class="abs" style="left:783px;top:180.90px;font-size:10.4px;line-height:14.0px;letter-spacing:0.258px;color:#454545;">3039DZ Rotterdam</div>
<div class="abs" style="left:783px;top:197.10px;font-size:10.4px;line-height:14.0px;letter-spacing:0.354px;color:#35466f;">Open adres in Google</div>
<div class="abs" style="left:783px;top:213.30px;font-size:10.4px;line-height:14.0px;letter-spacing:0.395px;color:#35466f;">Maps</div>
<svg class="abs" style="left:812px;top:214.500px" width="12.500" height="12.500" viewBox="0 0 13 13"><g fill="none" stroke="#35466f" stroke-width="1.100" stroke-linecap="round" stroke-linejoin="round"><path d="M9.500 7.500v3a1 1 0 0 1-1 1h-6a1 1 0 0 1-1-1v-6a1 1 0 0 1 1-1h3"/><path d="M7.500 1.500h4v4M11.300 1.700l-5.300 5.300"/></g></svg>
<div class="abs" style="left:655px;top:237.10px;font-size:10.4px;line-height:14.0px;letter-spacing:-0.086px;font-weight:bold;color:#2a2a2a;">Status</div><div class="abs" style="left:783px;top:237.10px;font-size:10.4px;line-height:14.0px;letter-spacing:-0.229px;color:#454545;">SAT</div>
<div class="abs" style="left:655px;top:260.80px;font-size:10.4px;line-height:14.0px;letter-spacing:0.187px;font-weight:bold;color:#2a2a2a;">Datum laatste stap</div><div class="abs" style="left:783px;top:260.80px;font-size:10.4px;line-height:14.0px;letter-spacing:0.247px;color:#454545;">5 aug, 13:09</div>
<div class="abs" style="left:655px;top:284.50px;font-size:10.4px;line-height:14.0px;letter-spacing:0.022px;font-weight:bold;color:#2a2a2a;">Procestype</div><div class="abs" style="left:783px;top:284.50px;font-size:10.4px;line-height:14.0px;letter-spacing:0.161px;color:#454545;">Strategisch</div>
<div class="abs" style="left:655px;top:308.30px;font-size:10.4px;line-height:14.0px;letter-spacing:-0.371px;font-weight:bold;color:#2a2a2a;">Tags</div><div class="abs" style="left:783px;top:308.30px;font-size:10.4px;line-height:14.0px;letter-spacing:0.167px;color:#454545;">Er zijn geen tags</div>

<div class="abs btn" style="left:651px;top:337px;width:247.500px;height:26.300px;background:#5f6b85;"></div><div class="abs" style="left:724.5px;top:342.70px;font-size:10.8px;line-height:14.0px;letter-spacing:-0.018px;color:#e9ebf1;">Genereer aanzichten</div>
<div class="abs btn" style="left:651px;top:374.500px;width:247.500px;height:26px;border:1px solid #46557d;"></div><div class="abs" style="left:669px;top:379.50px;font-size:11.1px;line-height:14.0px;letter-spacing:0.031px;color:#3b4869;">Download een gegenereerd startdocument</div>

<!-- ================= FOOTER ================= -->
<div class="abs" style="left:0;top:561.500px;width:1024px;height:17px;background:#dee1e6"></div>
<div class="abs" style="left:476.5px;top:563.50px;font-size:8.2px;line-height:14.0px;letter-spacing:0.019px;color:#4a5063;">Hallo Guus Colenbrander, u bent actief als Beheerder in de laadpalen workflow van EVTools. Voor vragen neem contact op met <span style="color:#27304d">support@evtools.nl</span>.</div>

<!-- EVtools card -->
<div class="abs" style="left:5.500px;top:532px;width:102px;height:38.500px;background:#fff;border-radius:4px;box-shadow:0 1px 6px rgba(0,0,0,.22)"></div>
<svg class="abs" style="left:8.53px;top:537.26px" width="32.62" height="29.36" viewBox="0 0 40 36">
<g clip-path="url(#hx)">
<rect width="40" height="36" fill="#3367b6"/>
<polygon points="5.48,9.66 17.13,3.74 17.13,15.58 12.46,20.56 14.33,24.92 17.13,31.03 5.48,24.30" fill="#2f62b0"/>
<polygon points="5.92,14.33 9.35,13.40 12.15,14.95 9.97,17.13 6.23,16.82" fill="#4a8ff0"/>
<polygon points="6.23,18.69 9.35,18.07 9.97,20.56 7.48,21.50" fill="#4d94f2"/>
<polygon points="13.40,12.15 16.51,11.21 17.45,13.40 14.95,14.33" fill="#4a8ff0"/>
<polygon points="14.64,4.67 18.69,4.36 20.56,6.23 18.07,8.10 14.95,7.17" fill="#2c63b8"/>
<polygon points="13.40,6.85 15.89,8.10 18.69,7.79 21.50,6.54 25.23,8.72 22.12,11.53 19.94,11.21 18.07,13.40 14.95,12.15 13.40,9.97" fill="#55b374"/>
<polygon points="18.69,7.79 21.50,6.23 29.78,10.28 29.78,20.87 24.92,20.87 21.50,19.00 21.81,11.53" fill="#a6dbb2"/>
<polygon points="22.43,14.02 26.17,12.77 28.35,15.26 25.55,17.13 22.74,16.51" fill="#7cc892"/>
<polygon points="18.69,11.21 21.50,11.84 21.81,14.64 19.63,14.33" fill="#2f66b4"/>
<polygon points="10.90,16.51 17.45,13.40 21.50,15.58 21.50,20.25 17.45,22.12 13.40,20.87" fill="#9ed7aa"/>
<polygon points="11.21,16.82 14.95,15.26 18.07,16.32 15.58,18.07 12.46,18.38" fill="#74c48b"/>
<polygon points="13.40,20.87 17.45,22.12 21.50,20.25 21.93,28.79 18.69,27.10 14.21,24.92" fill="#62bc80"/>
<polygon points="21.50,20.25 24.92,20.87 29.78,20.87 29.78,23.99 21.93,28.54" fill="#3467b8"/>
<polygon points="25.55,21.81 28.97,21.18 29.28,23.68 26.48,24.92" fill="#4a90f2"/>
<polygon points="21.81,24.61 24.61,24.92 23.99,27.41 21.93,28.35" fill="#4c93f4"/>
<polygon points="9.97,9.35 13.40,8.72 14.02,13.08 11.84,14.33 9.66,11.84" fill="#2b5a58"/>
<polygon points="9.03,18.38 12.15,18.07 13.40,21.18 12.77,23.36 9.97,21.81" fill="#2b5a58"/>
<polygon points="13.40,25.23 18.69,27.10 20.25,29.28 17.13,31.03 14.02,28.66" fill="#2b5a58"/>
<g fill="#d9c21f"><circle cx="11.53" cy="11.53" r=".42"/><circle cx="12.46" cy="13.27" r=".36"/><circle cx="11.40" cy="20.25" r=".42"/><circle cx="12.34" cy="21.93" r=".36"/><circle cx="14.64" cy="27.41" r=".4"/><circle cx="16.51" cy="28.54" r=".42"/><circle cx="18.38" cy="28.54" r=".4"/><circle cx="17.45" cy="30.22" r=".4"/></g>
</g>
</svg>
<div class="abs" style="left:38.400px;top:541.50px;font-size:16px;line-height:20.0px;letter-spacing:0.680px;color:#1b1b1b;-webkit-text-stroke:.45px #1b1b1b;">EVtools</div>

<!-- chat button -->
<div class="abs" style="left:972px;top:524px;width:34px;height:34px;border-radius:50%;background:#2f6df3"></div>
<svg class="abs" style="left:983px;top:535px" width="13" height="12" viewBox="0 0 13 12"><path d="M1.500 .8h10a.8 .8 0 0 1 .8 .8v6.400a.8 .8 0 0 1-.8 .8h-8.300l-2.500 2.400v-9.600a.8 .8 0 0 1 .8-.8z" fill="#fff"/><rect x="2.800" y="2.800" width="7" height="1.700" fill="#8fb0f8"/><rect x="2.800" y="5.400" width="4.600" height="1.100" fill="#8fb0f8"/></svg>

</div>
</body>
</html>
